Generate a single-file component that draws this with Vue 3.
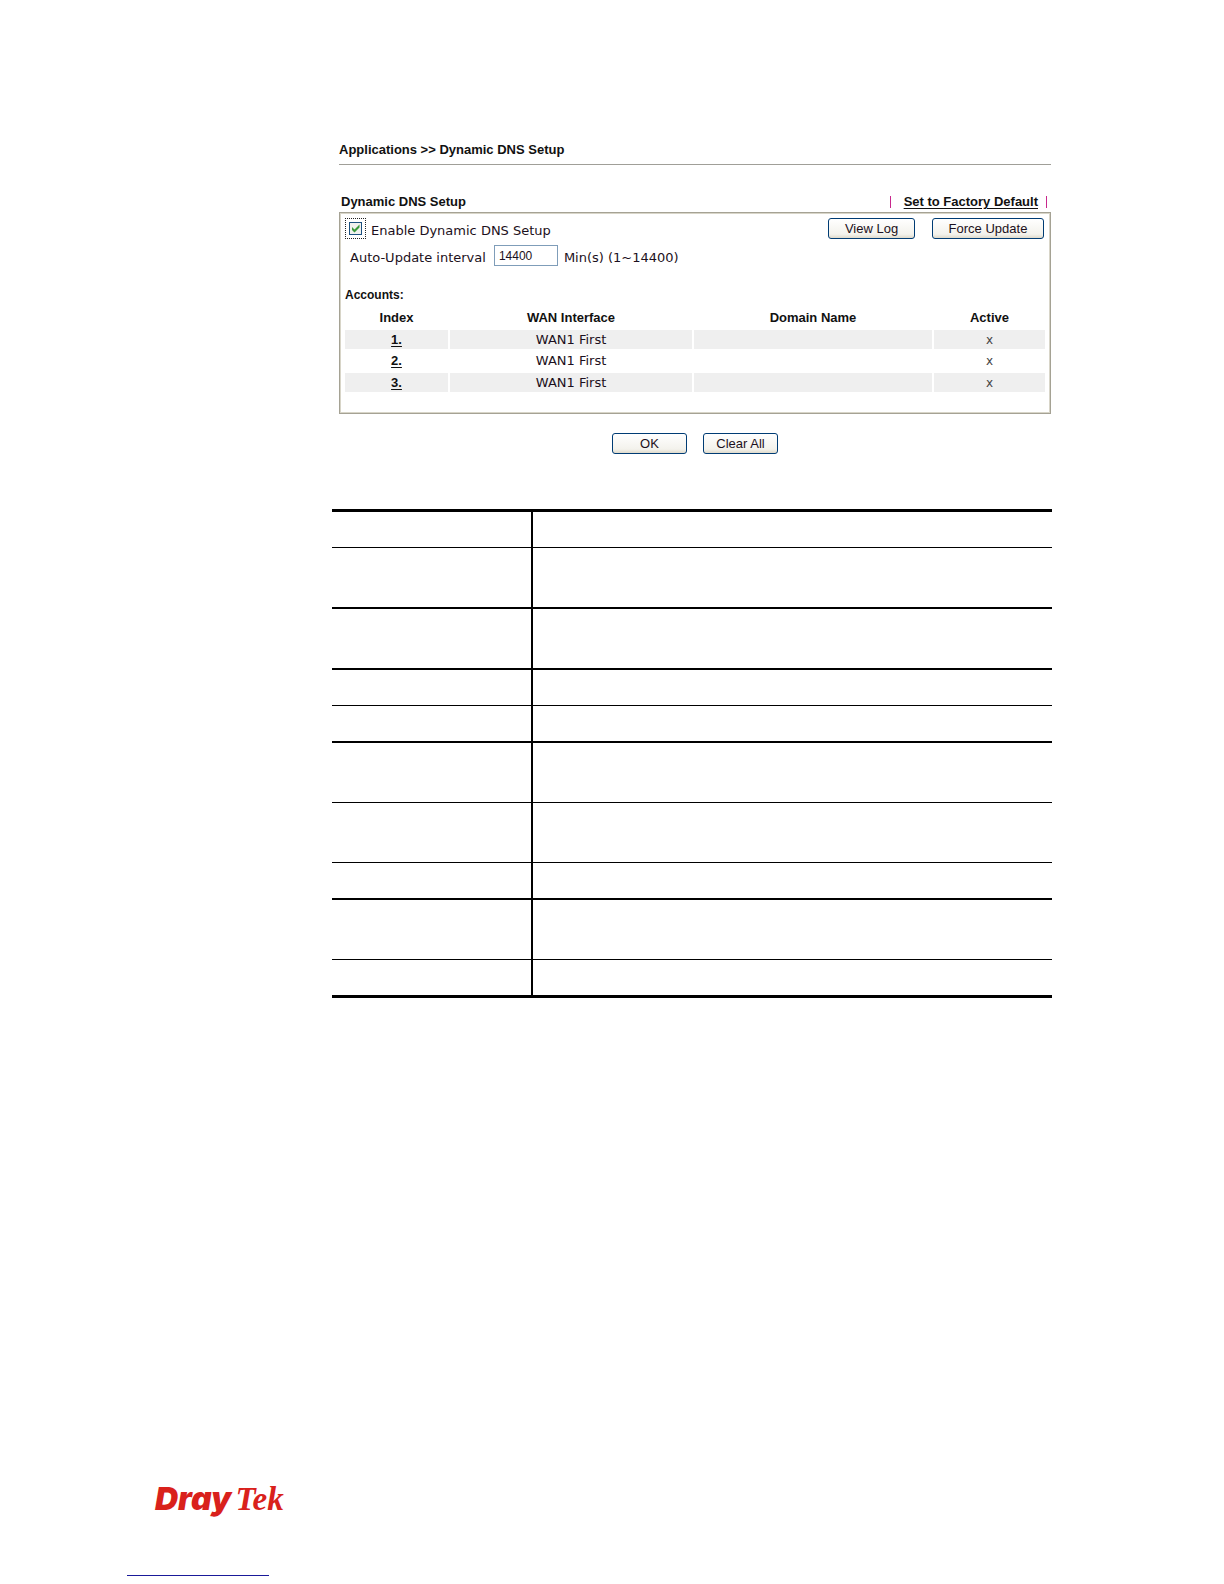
<template>
  <div class="page">
    <main class="content">
      <form class="setup" @submit.prevent>
        <h1 class="breadcrumb">Applications &gt;&gt; Dynamic DNS Setup</h1>

        <div class="title-row">
          <h2>Dynamic DNS Setup</h2>
          <div class="factory">
            <a href="#" @click.prevent="factoryDefault">Set to Factory Default</a>
          </div>
        </div>

        <section class="panel">
          <div class="enable-row">
            <span class="focus-box">
              <input id="enable" v-model="enabled" type="checkbox" />
              <svg v-if="enabled" viewBox="0 0 13 13" aria-hidden="true">
                <path d="M3 5v3l2.5 2.5L10.500 5.500v-3L5.500 7.500z" fill="#3a9a3a" />
              </svg>
            </span>
            <label for="enable">Enable Dynamic DNS Setup</label>
            <div class="tools">
              <button type="button" class="btn view-log">View Log</button>
              <button type="button" class="btn force-update">Force Update</button>
            </div>
          </div>

          <div class="interval-row">
            <label for="interval">Auto-Update interval</label>
            <input id="interval" v-model="interval" type="text" />
            <span>Min(s) (1~14400)</span>
          </div>

          <h3>Accounts:</h3>
          <table class="accounts">
            <thead>
              <tr>
                <th class="col-index">Index</th>
                <th class="col-wan">WAN Interface</th>
                <th class="col-domain">Domain Name</th>
                <th class="col-active">Active</th>
              </tr>
            </thead>
            <tbody>
              <tr v-for="account in accounts" :key="account.index">
                <td><a href="#" @click.prevent>{{ account.index }}.</a></td>
                <td>{{ account.wan }}</td>
                <td>{{ account.domain }}</td>
                <td class="active">{{ account.active ? 'v' : 'x' }}</td>
              </tr>
            </tbody>
          </table>
        </section>

        <div class="actions">
          <button type="submit" class="btn">OK</button>
          <button type="button" class="btn" @click="clearAll">Clear All</button>
        </div>
      </form>

      <table class="description">
        <tbody>
          <tr v-for="(row, i) in rows" :key="i" :class="row">
            <td class="item"></td>
            <td></td>
          </tr>
        </tbody>
      </table>
    </main>

    <footer class="footer">
      <div class="logo"><span class="dray">Dray</span><span class="tek">Tek</span></div>
      <div class="footer-line"></div>
    </footer>
  </div>
</template>

<script setup>
import { ref } from 'vue'

const enabled = ref(true)
const interval = ref('14400')
const accounts = ref([
  { index: 1, wan: 'WAN1 First', domain: '', active: false },
  { index: 2, wan: 'WAN1 First', domain: '', active: false },
  { index: 3, wan: 'WAN1 First', domain: '', active: false }
])

// row height and weight of the rule below it
const rows = [
  'short thin',
  'tall medium',
  'tall medium',
  'short thin',
  'short medium',
  'tall thin',
  'tall thin',
  'short medium',
  'tall thin',
  'short thick'
]

function factoryDefault() {
  enabled.value = false
  interval.value = '14400'
}

function clearAll() {
  accounts.value.forEach((account) => {
    account.domain = ''
    account.active = false
  })
}
</script>

<style>
body { margin: 0; background: #fff; }
</style>

<style scoped>
.page { display: flex; flex-direction: column; min-height: 100vh; box-sizing: border-box; padding: 141px 172px 8px 127px; font-family: "DejaVu Sans", Verdana, sans-serif; font-size: 13px; color: #1c1020; }
.content { flex: 1; margin-left: 205px; }
.setup { margin: 0 1px 0 7px; }
h1, h2, h3, th { margin: 0; font-family: "Liberation Sans", Arial, sans-serif; font-size: 13px; line-height: 18px; font-weight: bold; color: #111; }
.breadcrumb { padding-bottom: 5px; border-bottom: 1px solid #a09f98; }
.title-row { display: flex; justify-content: space-between; padding: 28px 4px 1px 2px; }
.factory { display: flex; align-items: center; font-family: "Liberation Sans", Arial, sans-serif; font-size: 13px; line-height: 18px; font-weight: bold; }
.factory::before, .factory::after { content: ""; width: 1px; height: 12px; background: #c8288c; }
.factory a { margin: 0 8px 0 13px; color: #111; text-underline-offset: 2px; }
.panel { border: 1px solid #a5a294; box-shadow: inset 0 0 0 1px #d8d5c8; padding: 5px 3px 19px; }
.enable-row { display: flex; align-items: center; padding: 0 3px 0 2px; }
.focus-box { position: relative; display: flex; padding: 3px; border: 1px dotted #222; }
.focus-box input { appearance: none; width: 13px; height: 13px; margin: 0; border: 1px solid #1c5180; background: #f1f1ee; }
.focus-box svg { position: absolute; inset: 3px; width: 13px; height: 13px; pointer-events: none; }
.enable-row label { margin-left: 5px; padding-top: 3px; }
.tools { display: flex; gap: 17px; margin-left: auto; }
.btn { width: 75px; height: 21px; padding: 0; border: 1px solid #003c74; border-radius: 3px; background: linear-gradient(#fff, #f3f2ec 80%, #dfdacb); font-family: "Liberation Sans", Arial, sans-serif; font-size: 13px; color: #1c1020; }
.view-log { width: 87px; }
.force-update { width: 112px; }
.interval-row { display: flex; align-items: center; padding: 6px 7px 0; }
.interval-row input { box-sizing: border-box; width: 64px; height: 21px; margin: 0 6px 0 8px; padding: 0 4px; border: 1px solid #7f9db9; background: #fff; font-family: "Liberation Sans", Arial, sans-serif; font-size: 12px; color: #1c1020; }
.interval-row label, .interval-row span { padding-top: 4px; }
h3 { margin: 20px 2px 0; font-size: 12px; }
.accounts { width: 100%; margin-top: 2px; table-layout: fixed; border-collapse: separate; border-spacing: 2px; }
.accounts th, .accounts td { height: 20px; padding: 0; text-align: center; line-height: 18px; }
.accounts tbody tr:nth-child(odd) td { height: 19px; background: #efefef; }
.col-index { width: 103px; }
.col-wan { width: 242px; }
.col-active { width: 111px; }
.accounts a { font-family: "Liberation Sans", Arial, sans-serif; font-size: 13px; font-weight: bold; color: #111; text-underline-offset: 2px; }
.accounts .active { font-size: 12px; color: #444; }
.actions { display: flex; justify-content: center; gap: 16px; margin-top: 19px; }
.description { width: 100%; margin-top: 55px; border-collapse: separate; border-spacing: 0; border-top: 3px solid #000; }
.description td { padding: 0; border-bottom: 1px solid #000; }
.description .item { width: 199px; border-right: 2px solid #000; }
.short td { height: 35px; }
.tall td { height: 59px; }
.medium td { border-bottom-width: 2px; }
.thick td { border-bottom-width: 3px; }
.logo { display: flex; align-items: baseline; gap: 4px; margin-left: 28px; line-height: 40px; color: #d9211c; }
.dray { font-family: Inter, sans-serif; font-size: 32px; font-weight: 900; font-style: italic; }
.tek { font-family: "Liberation Serif", serif; font-size: 33px; font-weight: bold; font-style: italic; }
.footer-line { width: 142px; height: 1px; margin-top: 56px; background: #1a1a9a; }
</style>
